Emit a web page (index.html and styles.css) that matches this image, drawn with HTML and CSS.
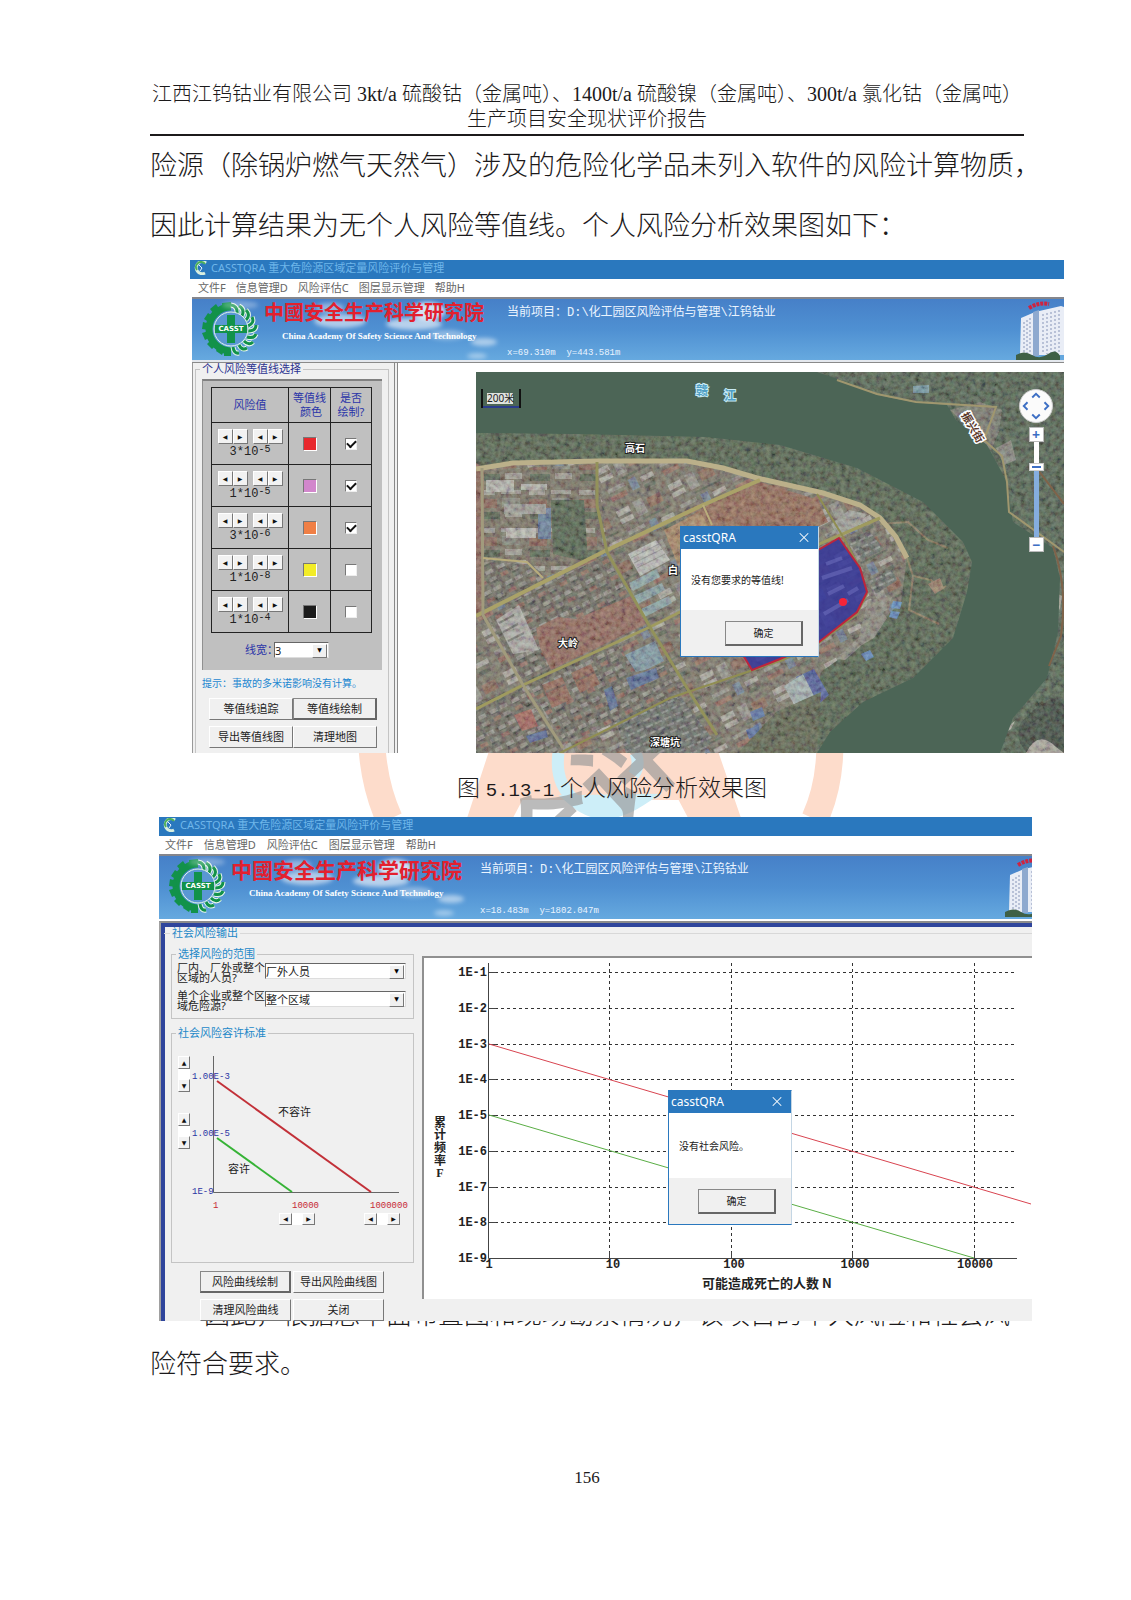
FILE: index.html
```html
<!DOCTYPE html>
<html lang="zh-CN">
<head>
<meta charset="utf-8">
<meta name="viewport" content="width=device-width, initial-scale=1">
<title>生产项目安全现状评价报告</title>
<link rel="stylesheet" href="styles.css">
</head>
<body>
<svg class="defs" width="0" height="0" aria-hidden="true">
  <defs>
    <symbol id="app-icon" viewBox="0 0 14 14">
      <path d="M12 2A6 6 0 1 0 11 12" fill="none" stroke="#d9efe0" stroke-width="3"/>
      <path d="M11 3A5 5 0 0 0 3 9" fill="none" stroke="#4aae5a" stroke-width="2"/>
      <path d="M5 4l3 3-2 3" fill="none" stroke="#e8f4ff" stroke-width="1"/>
    </symbol>
    <symbol id="casst-logo" viewBox="0 0 58 54">
      <path d="M29 5A22 22 0 0 0 29 49" fill="none" stroke="#12924a" stroke-width="7"/>
      <path d="M20 1l9-1v6h-9zM8 7l6-5 4 6-6 4zM2 17l4-6 6 4-4 6zM0 27l1-7 7 2-1 6zM3 38l-3-7 7-2 2 6zM10 47l-5-5 5-5 5 5zM20 53l-6-4 3-6 6 3zM29 54h-7v-6h7z" fill="#12924a"/>
      <g fill="none" stroke="#e6f6ea" stroke-width="5">
        <path d="M29 3q7 1 6 9M37 4q6 3 3 10M44 8q5 5 0 10M50 15q3 6-4 9M54 23q0 6-8 6M54 32q-2 5-9 3M51 40q-4 4-9-1M45 46q-5 3-8-3M37 51q-5 1-6-6"/>
      </g>
      <g fill="none" stroke="#12924a" stroke-width="3">
        <path d="M29 3q7 1 6 9M37 4q6 3 3 10M44 8q5 5 0 10M50 15q3 6-4 9M54 23q0 6-8 6M54 32q-2 5-9 3M51 40q-4 4-9-1M45 46q-5 3-8-3M37 51q-5 1-6-6"/>
      </g>
      <circle cx="29" cy="27" r="17" fill="#5a97d4" stroke="#e6f6ea" stroke-width="1"/>
      <path d="M25 13h8v10h12v8H33v10h-8V31H13v-8h12z" fill="#12924a"/>
      <text x="29" y="29" text-anchor="middle" class="logo-text">CASST</text>
    </symbol>
    <symbol id="clouds" viewBox="0 0 310 63">
      <g fill="#fff" filter="url(#soft)">
        <ellipse cx="148" cy="22" rx="26" ry="7" opacity=".55"/>
        <ellipse cx="138" cy="9" rx="14" ry="5" opacity=".4"/>
        <ellipse cx="236" cy="12" rx="17" ry="9" opacity=".75"/>
        <ellipse cx="222" cy="25" rx="28" ry="6" opacity=".6"/>
        <ellipse cx="255" cy="36" rx="18" ry="5" opacity=".35"/>
        <ellipse cx="292" cy="43" rx="13" ry="4" opacity=".5"/>
        <ellipse cx="285" cy="57" rx="10" ry="3" opacity=".4"/>
        <ellipse cx="48" cy="6" rx="18" ry="4" opacity=".3"/>
      </g>
    </symbol>
    <symbol id="tower" viewBox="0 0 48 60">
      <path d="M5 18l14-6 26-6 3 1v48H4z" fill="#e9edf6"/>
      <path d="M17 12l6-2v46h-6z" fill="#8ea9cf"/>
      <path d="M8 22v32M11 20v34M14 18v34M27 14v40M31 13v41M35 12v42M39 11v43M43 10v44" stroke="#8795b8" stroke-width="1" stroke-dasharray="2 2"/>
      <path d="M13 8q10-6 20-4" fill="none" stroke="#cf2440" stroke-width="4" stroke-dasharray="3 1"/>
      <path d="M0 55q8-5 16 0t16-1 12 2v4H0z" fill="#3f6046"/>
    </symbol>
    <filter id="soft"><feGaussianBlur stdDeviation="2"/></filter>
  </defs>
</svg>

<main class="page">
  <header class="page-header">
    <div>江西江钨钴业有限公司 3kt/a 硫酸钴（金属吨）、1400t/a 硫酸镍（金属吨）、300t/a 氯化钴（金属吨）</div>
    <div>生产项目安全现状评价报告</div>
  </header>

  <p class="body-text">险源（除锅炉燃气天然气）涉及的危险化学品未列入软件的风险计算物质，<br>因此计算结果为无个人风险等值线。个人风险分析效果图如下：</p>

  <figure class="window window-personal">
    <div class="titlebar"><svg class="app-icon"><use href="#app-icon"/></svg>CASSTQRA 重大危险源区域定量风险评价与管理</div>
    <nav class="menubar"><button>文件F</button><button>信息管理D</button><button>风险评估C</button><button>图层显示管理</button><button>帮助H</button></nav>
    <div class="banner">
      <svg class="clouds"><use href="#clouds"/></svg>
      <svg class="logo"><use href="#casst-logo"/></svg>
      <div class="org"><strong>中國安全生产科学研究院</strong><span>China Academy Of Safety Science And Technology</span></div>
      <div class="project"><span>当前项目：D:\化工园区风险评估与管理\江钨钴业</span><small>x=69.310m&nbsp; y=443.581m</small></div>
      <svg class="tower"><use href="#tower"/></svg>
    </div>
    <div class="personal-body">
      <form class="side">
        <fieldset class="group">
          <legend>个人风险等值线选择</legend>
          <div class="levels">
            <table>
              <thead><tr><th>风险值</th><th>等值线<br>&nbsp;颜色</th><th>是否<br>绘制?</th></tr></thead>
              <tbody>
                <tr><td><div class="steps"><button type="button" aria-label="减" class="step left"></button><button type="button" aria-label="加" class="step right"></button><button type="button" aria-label="指数减" class="step left"></button><button type="button" aria-label="指数加" class="step right"></button></div><div class="value">3*10<sup>-5</sup></div></td><td><span class="swatch red"></span></td><td><input type="checkbox" aria-label="绘制 3*10-5" checked></td></tr>
                <tr><td><div class="steps"><button type="button" aria-label="减" class="step left"></button><button type="button" aria-label="加" class="step right"></button><button type="button" aria-label="指数减" class="step left"></button><button type="button" aria-label="指数加" class="step right"></button></div><div class="value">1*10<sup>-5</sup></div></td><td><span class="swatch pink"></span></td><td><input type="checkbox" aria-label="绘制 1*10-5" checked></td></tr>
                <tr><td><div class="steps"><button type="button" aria-label="减" class="step left"></button><button type="button" aria-label="加" class="step right"></button><button type="button" aria-label="指数减" class="step left"></button><button type="button" aria-label="指数加" class="step right"></button></div><div class="value">3*10<sup>-6</sup></div></td><td><span class="swatch orange"></span></td><td><input type="checkbox" aria-label="绘制 3*10-6" checked></td></tr>
                <tr><td><div class="steps"><button type="button" aria-label="减" class="step left"></button><button type="button" aria-label="加" class="step right"></button><button type="button" aria-label="指数减" class="step left"></button><button type="button" aria-label="指数加" class="step right"></button></div><div class="value">1*10<sup>-8</sup></div></td><td><span class="swatch yellow"></span></td><td><input type="checkbox" aria-label="绘制 1*10-8"></td></tr>
                <tr><td><div class="steps"><button type="button" aria-label="减" class="step left"></button><button type="button" aria-label="加" class="step right"></button><button type="button" aria-label="指数减" class="step left"></button><button type="button" aria-label="指数加" class="step right"></button></div><div class="value">1*10<sup>-4</sup></div></td><td><span class="swatch black"></span></td><td><input type="checkbox" aria-label="绘制 1*10-4"></td></tr>
              </tbody>
            </table>
            <div class="line-width"><label for="lw">线宽：</label><span class="select narrow"><select id="lw"><option>3</option></select></span></div>
          </div>
          <p class="hint">提示：事故的多米诺影响没有计算。</p>
          <div class="actions">
            <button type="button" class="win-btn">等值线追踪</button><button type="button" class="win-btn default">等值线绘制</button>
            <button type="button" class="win-btn">导出等值线图</button><button type="button" class="win-btn">清理地图</button>
          </div>
        </fieldset>
      </form>
      <div class="map-area">
        <div class="map">
          <svg class="map-picture" viewBox="0 0 588 381" preserveAspectRatio="xMinYMin slice" role="img" aria-label="卫星地图">
            <defs>
              <filter id="grain" x="0" y="0" width="100%" height="100%">
                <feTurbulence type="fractalNoise" baseFrequency=".2" numOctaves="4" seed="4"/>
                <feColorMatrix values="1.6 0 0 0 -.35  0 1.6 0 0 -.4  0 0 1.5 0 -.4  0 0 0 0 1"/>
                <feColorMatrix type="saturate" values=".25"/>
              </filter>
              <pattern id="works" width="58" height="46" patternUnits="userSpaceOnUse" patternTransform="rotate(-27)">
                <rect width="58" height="46" fill="#706b5c"/>
                <path d="M3 4h14v6H3zM3 13h14v5H3zM40 30h14v5H40z" fill="#aaa79d"/>
                <path d="M22 3h10v16H22zM5 27h18v4H5z" fill="#908f86"/>
                <path d="M36 6h15v10H36z" fill="#85604d"/>
                <path d="M28 27h8v12h-8z" fill="#66798f"/>
                <path d="M5 35h17v5H5z" fill="#8f6353"/>
                <path d="M40 39h12v4H40zM24 22h30v2H24z" fill="#505a49"/>
              </pattern>
              <pattern id="homes" width="24" height="18" patternUnits="userSpaceOnUse" patternTransform="rotate(-27)">
                <rect width="24" height="18" fill="#62605400"/>
                <rect width="24" height="18" fill="#626054"/>
                <path d="M2 2h8v4H2zM13 2h8v4h-8z" fill="#8f8c83"/>
                <path d="M2 10h8v4H2z" fill="#8a6152"/><path d="M13 10h8v4h-8z" fill="#827e73"/>
                <path d="M2 6h8v1H2zM13 14h8v2h-8z" fill="#454a40"/>
              </pattern>
              <pattern id="terraces" width="10" height="7" patternUnits="userSpaceOnUse" patternTransform="rotate(-24)">
                <rect width="10" height="7" fill="#5b615b"/><path d="M1 1h7v2H1z" fill="#868a85"/>
              </pattern>
              <pattern id="straight" width="50" height="38" patternUnits="userSpaceOnUse">
                <rect width="50" height="38" fill="#6f6857"/>
                <path d="M3 4h16v5H3zM25 4h20v4H25zM29 25h17v6H29z" fill="#9d9a90"/>
                <path d="M3 13h18v9H3z" fill="#825c4b"/><path d="M26 12h18v9H26z" fill="#7d8074"/><path d="M4 26h20v7H4z" fill="#4b5944"/>
              </pattern>
            </defs>
            <rect width="588" height="381" fill="#4d6351"/>
            <path d="M0 61L100 58 230 63 304 73 381 96 447 130 487 170 496 190 491 220 477 266 437 306 387 330 354 360 341 381H0z" fill="#45573f"/>
            <path d="M341 0L371 10 401 23 437 30 471 33 480 48 511 73 531 110 537 150 577 176 588 200V0zM524 381L537 346 571 306 582 260 588 230V381z" fill="#435742"/>
            <path d="M0 96L37 91 121 89 211 89 247 96 281 106 347 121 384 133 404 146 431 186 425 230 380 275 345 300 341 320 320 381H0z" fill="url(#works)"/>
            <path d="M8 98L120 92 132 180 70 205 51 188 8 186z" fill="url(#straight)"/>
            <path d="M122 92L210 92 275 106 227 130 135 174z" fill="url(#works)"/>
            <path d="M75 128h33l4 62-35-8z" fill="#44573f"/>
            <path d="M8 190L52 192 63 212 8 238z" fill="url(#homes)"/>
            <path d="M63 213L130 184 170 250 70 296 48 308 12 246z" fill="url(#homes)"/>
            <path d="M60 256L82 245 100 247 155 224 170 252 75 298 64 276z" fill="#8c5e4f"/>
            <path d="M20 248L43 233 63 278 37 282z" fill="#aaa9a3"/>
            <path d="M23 251l15-8M27 260l15-8M32 269l16-8" stroke="#6b6d67" stroke-width="2"/>
            <path d="M232 133L284 110 310 118 342 128 352 150 304 172 205 172 204 150z" fill="#8f614a"/>
            <path d="M188 158l36-18 18 30-40 24z" fill="#a6805a"/>
            <path d="M152 182l28-14 14 20-30 16z" fill="#b9bbb6"/>
            <path d="M155 186l28-14M158 191l28-14M161 196l28-14" stroke="#8d908c"/>
            <path d="M153 211l28-14 3 8-27 14zM158 224l28-13 3 7-27 14zM165 237l28-13 3 7-27 14z" fill="#84a2a4"/>
            <path d="M149 283l30-14 9 20-28 14z" fill="#7795a2"/>
            <path d="M62 136h13v31H62z" fill="#5c7898"/><path d="M28 132h42v10H28z" fill="#9d9d96"/><path d="M30 156h30v10H30z" fill="#b7b7b0"/>
            <path d="M10 108h28v12H10zM45 112h26v6H45z" fill="#b3b3ab"/>
            <path d="M50 310L140 270 160 300 195 292 214 318 90 372z" fill="url(#homes)"/>
            <path d="M66 313l20-8 10 22-20 9zM95 301l20-9 9 20-20 9z" fill="#8d5d4b"/>
            <path d="M70 320l20-8M100 309l19-9" stroke="#6b5548" stroke-width="2"/>
            <path d="M128 318l8-4 6 20-8 5zM150 306l30-10 3 10-28 12z" fill="#4a6392"/>
            <path d="M140 348L194 327 205 325 236 366 228 381H150z" fill="url(#terraces)"/>
            <path d="M0 338L45 316 86 376 80 381H0z" fill="url(#homes)"/>
            <path d="M38 343l17-6 7 17-16 5z" fill="#a35a50"/><path d="M50 364l20-6 2 7-18 6z" fill="#485c92"/>
            <path d="M320 305l18-8 15 26-18 16z" fill="#43549a"/><path d="M308 314l19-12 12 24-18 12z" fill="#a2b2b2"/>
            <path d="M274 340l12-5 3 9-12 5zM270 358l12-5 3 9-12 5z" fill="#4a68a0"/>
            <path d="M0 91L8 96 8 240 0 243z" fill="#875d4e"/>
            <path d="M300 340L345 320 341 381H262z" fill="#515941"/>
            <path d="M392 228l24-3-3 12-7 3 5 6-13 20-12 7-17 15-8-1 22-22z" fill="#858377"/>
            <path d="M417 229l9 1-2 7-9-1zM415 239l9 1-3 7-8-2zM385 282l9-4 4 7-8 4z" fill="#5585c0"/>
            <path d="M371 168l22-9 15 18-22 12zM393 208l22-11 6 11-21 14z" fill="url(#terraces)"/>
            <path d="M355 152l18-14 18 4-12 16-16 8z" fill="#9b9d95"/>
            <path d="M431 186l6 18 18 4 9 10 6-4M437 204l-4 34 30 14M404 152l28-2 20 18 20 8" fill="none" stroke="#80704f" stroke-width="2"/>
            <path d="M452 212l12-6 4 10-9 6z" fill="#96785e"/>
            <path d="M474 38l30-8 22 8-3 22-8 18-20-20z" fill="#6f7064"/><path d="M437 14l16-1v8h-16z" fill="#6892a2"/>
            <path d="M520 76l15-8 5 20-12 5z" fill="#7f8177"/><path d="M544 352q18-22 38-26l6 8v47h-36q-14-12-8-29z" fill="#2d3c30"/>
            <path d="M550 381q12-24 30-6l8 6zM527 358l12-9-4 8-8 6zM582 222l4 2-2 14-3-6z" fill="#a8a599"/>
            <rect width="588" height="381" filter="url(#grain)" class="grain"/>
            <path d="M0 0H341L371 10 401 23 437 30 471 33 480 48 511 73 531 110 537 150 577 176 584 206 582 260 571 306 537 346 524 381H341L354 360 387 330 437 306 477 266 491 220 496 190 487 170 447 130 381 96 304 73 230 65 100 62 0 61z" fill="#4c6556"/>
            <g fill="none" stroke="#b9ad7c" stroke-width="4">
              <path d="M0 97L37 91 121 89 211 89 247 96 281 106 347 121 384 133 404 146 420 165 431 186" stroke-width="5" stroke="#bbb08a"/>
              <path d="M0 244L127 180 227 133 284 108" stroke="#aaa268" stroke-width="4"/>
              <path d="M0 337L47 313 174 255 204 240 343 172 404 146" stroke="#9f9b5f" stroke-width="3"/>
              <path d="M84 381L194 326 307 288 343 271 381 242 391 222 384 196 366 163 341 122" stroke="#908e52" stroke-width="2"/>
              <path d="M121 90L121 133 131 180 174 255 211 316 241 363" stroke="#93925a" stroke-width="3"/>
              <path d="M6 96L7 243 47 313 87 376" stroke="#a19b7d" stroke-width="3"/>
              <path d="M7 186L51 190 67 206M227 133l9 20" stroke-width="2"/>
              <path d="M361 8L401 22 440 30 520 35 508 68 526 84 531 110 533 140 588 180" stroke-width="2" stroke="#a0976f"/>
              <path d="M562 98l26 34M577 174q15 40 8 90l-12 30" stroke="#7f634a" stroke-width="2"/>
            </g>
            <path d="M276 298L267 283 330 185 363 166 384 196 391 220 381 240 343 270 304 287z" fill="#35369b" fill-opacity=".85" stroke="#bd253c" stroke-width="2"/>
            <path d="M350 192l16-6M346 206l30-10M352 222l16-8M372 222l10-6M348 242l24-14" stroke="#7374c2" stroke-width="4" opacity=".5"/>
            <circle cx="367" cy="230" r="4" fill="#f52438"/>
            <g class="map-labels">
              <text x="149" y="80">高石</text><text x="82" y="275">大岭</text><text x="174" y="374">深塘坑</text><text x="192" y="202">白</text>
            </g>
            <g class="river-labels"><text x="220" y="23">赣</text><text x="248" y="28">江</text></g>
            <text class="street-label" x="485" y="43" transform="rotate(60 485 43)">振兴街</text>
          </svg>
          <div class="scale">200米</div>
          <div class="map-nav">
            <button type="button" class="pan" aria-label="平移"><svg viewBox="0 0 34 34"><path d="M13 8l4-4 4 4M13 26l4 4 4-4M8 13l-4 4 4 4M26 13l4 4-4 4" fill="none" stroke="#3d6fc4" stroke-width="2"/></svg></button>
            <button type="button" class="zoom">+</button>
            <span class="track"><span class="thumb"></span></span>
            <button type="button" class="zoom">−</button>
          </div>
          <section class="dialog dialog-contour" role="dialog" aria-label="casstQRA">
            <div class="dialog-title">casstQRA<button type="button" aria-label="关闭" class="close"></button></div>
            <p>没有您要求的等值线!</p>
            <footer><button type="button" class="win-btn default">确定</button></footer>
          </section>
        </div>
      </div>
    </div>
  </figure>

  <div class="caption">
    <svg class="watermark" viewBox="0 0 873 64" preserveAspectRatio="xMidYMin slice" aria-hidden="true">
      <g fill="none" stroke="#fddccb" stroke-width="27"><path d="M222 -2Q225 35 239 66M679 -2Q678 35 664 66"/></g>
      <path d="M338 0H568L590 64H537L528 47H372L363 64H317z" fill="#fddccb"/>
      <path d="M408 0Q404 30 424 47M485 0q5 12-2 22M424 48q28 24 66-1z" fill="none" stroke="#cdeef8" stroke-width="12"/>
      <text x="393" y="141" transform="rotate(-43 393 141)" class="watermark-text">全评价</text>
    </svg>
    <span class="caption-text">图 <span class="figure-number">5.13-1</span> 个人风险分析效果图</span>
  </div>

  <figure class="window window-social">
    <div class="titlebar"><svg class="app-icon"><use href="#app-icon"/></svg>CASSTQRA 重大危险源区域定量风险评价与管理</div>
    <nav class="menubar"><button>文件F</button><button>信息管理D</button><button>风险评估C</button><button>图层显示管理</button><button>帮助H</button></nav>
    <div class="banner">
      <svg class="clouds"><use href="#clouds"/></svg>
      <svg class="logo"><use href="#casst-logo"/></svg>
      <div class="org"><strong>中國安全生产科学研究院</strong><span>China Academy Of Safety Science And Technology</span></div>
      <div class="project"><span>当前项目：D:\化工园区风险评估与管理\江钨钴业</span><small>x=18.483m&nbsp; y=1802.047m</small></div>
      <svg class="tower"><use href="#tower"/></svg>
    </div>
    <div class="social-body">
      <fieldset class="output">
        <legend>社会风险输出</legend>
        <div class="output-columns">
          <form class="controls">
            <fieldset class="group scope">
              <legend>选择风险的范围</legend>
              <div class="field"><label for="who">厂内、厂外或整个区域的人员?</label><span class="select"><select id="who"><option>厂外人员</option></select></span></div>
              <div class="field"><label for="where">单个企业或整个区域危险源?</label><span class="select"><select id="where"><option>整个区域</option></select></span></div>
            </fieldset>
            <fieldset class="group criteria">
              <legend>社会风险容许标准</legend>
              <svg viewBox="0 0 241 223" class="criteria-chart">
                <path d="M41.500 17V153.500H227" fill="none" stroke="#666"/>
                <path d="M45 42L199 153" stroke="#c23038" stroke-width="2"/>
                <path d="M45 99L120 153" stroke="#36b336" stroke-width="2"/>
                <g class="tick-blue"><text x="20" y="40">1.00E-3</text><text x="20" y="97">1.00E-5</text><text x="20" y="155">1E-9</text></g>
                <g class="tick-red"><text x="41" y="169">1</text><text x="120" y="169">10000</text><text x="198" y="169">1000000</text></g>
                <g class="zone"><text x="106" y="77">不容许</text><text x="56" y="134">容许</text></g>
              </svg>
              <div class="spin upper"><button type="button" aria-label="上" class="step up"></button><i></i><button type="button" aria-label="下" class="step down"></button></div>
              <div class="spin lower"><button type="button" aria-label="上" class="step up"></button><i></i><button type="button" aria-label="下" class="step down"></button></div>
              <div class="scroll near"><button type="button" aria-label="左" class="step left"></button><i></i><button type="button" aria-label="右" class="step right"></button></div>
              <div class="scroll far"><button type="button" aria-label="左" class="step left"></button><i></i><button type="button" aria-label="右" class="step right"></button></div>
            </fieldset>
            <div class="actions">
              <button type="button" class="win-btn default">风险曲线绘制</button><button type="button" class="win-btn">导出风险曲线图</button>
              <button type="button" class="win-btn">清理风险曲线</button><button type="button" class="win-btn">关闭</button>
            </div>
          </form>
          <div class="plot">
            <svg viewBox="0 0 607 341" preserveAspectRatio="xMinYMin meet" role="img" aria-label="累计频率 F 与可能造成死亡的人数 N">
              <g stroke="#333" stroke-dasharray="3 3">
                <path d="M65 14.500H593M65 50.500H593M65 86.500H593M65 121.500H593M65 157.500H593M65 193.500H593M65 229.500H593M65 264.500H593M185.500 5V300M307.500 5V300M428.500 5V300M550.500 5V300"/>
              </g>
              <path d="M64.500 5V300.500H593M65 14.500h7M65 50.500h7M65 86.500h7M65 121.500h7M65 157.500h7M65 193.500h7M65 229.500h7M65 264.500h7M185.500 300v-6M307.500 300v-6M428.500 300v-6M550.500 300v-6" fill="none" stroke="#444"/>
              <path d="M65 86L607 246" stroke="#d94450"/>
              <path d="M65 157L550 300" stroke="#5aae45"/>
              <g class="axis-y"><text x="63" y="18">1E-1</text><text x="63" y="54">1E-2</text><text x="63" y="90">1E-3</text><text x="63" y="125">1E-4</text><text x="63" y="161">1E-5</text><text x="63" y="197">1E-6</text><text x="63" y="233">1E-7</text><text x="63" y="268">1E-8</text><text x="63" y="304">1E-9</text></g>
              <g class="axis-x"><text x="65" y="310">1</text><text x="189" y="310">10</text><text x="310" y="310">100</text><text x="431" y="310">1000</text><text x="551" y="310">10000</text></g>
              <text class="axis-title" x="278" y="330">可能造成死亡的人数 N</text>
              <g class="axis-side"><text x="16" y="169">累</text><text x="16" y="181">计</text><text x="16" y="194">频</text><text x="16" y="207">率</text><text x="16" y="219">F</text></g>
            </svg>
            <section class="dialog dialog-social" role="dialog" aria-label="casstQRA">
              <div class="dialog-title">casstQRA<button type="button" aria-label="关闭" class="close"></button></div>
              <p>没有社会风险。</p>
              <footer><button type="button" class="win-btn default">确定</button></footer>
            </section>
          </div>
        </div>
      </fieldset>
    </div>
  </figure>

  <p class="body-text closing">因此，根据总平面布置图和现场勘察情况，该项目的个人风险和社会风<br>险符合要求。</p>
  <footer class="page-number">156</footer>
</main>
</body>
</html>
```
FILE: styles.css
```css
* { box-sizing: border-box; }
body { margin: 0; background: #fff; color: #1c1a1b; font-family: "Liberation Serif", "Noto Sans CJK SC", serif; }
button, select, input { font: inherit; color: inherit; margin: 0; padding: 0; border-radius: 0; }
.defs { position: absolute; }
.page { padding: 82px 107px 112px 150px; overflow: hidden; }

.page-header { border-bottom: 2px solid #1c1a1b; padding-bottom: 2px; text-align: center; font-size: 20px; font-weight: 300; line-height: 25px; white-space: nowrap; }
.body-text { margin: 0; font-size: 27px; font-weight: 300; line-height: 60px; white-space: nowrap; }

/* application windows */
.window { position: relative; z-index: 1; background: #fff; font: 11px/14px "Noto Sans", "Noto Sans CJK SC", sans-serif; }
.window-personal { margin: 4px -40px 0 40px; }
.window-social { margin: 0 -8px 0 9px; }
.titlebar { display: flex; align-items: center; gap: 3px; height: 19px; padding: 0 0 4px 4px; background: #2a78be; color: #6fb6ea; white-space: nowrap; }
.app-icon { width: 14px; height: 14px; }
.menubar { display: flex; gap: 10px; height: 18px; padding-left: 8px; color: #666; }
.window-social .menubar { padding-left: 6px; gap: 11px; }
.menubar button { border: 0; background: none; line-height: 16px; }
.banner { position: relative; display: flex; height: 65px; overflow: hidden; margin-left: 2px; border-top: 2px solid #85868c; border-bottom: 2px solid #e4e8ee; background: linear-gradient(#4680c8, #4f90d2 50%, #66a9df); }
.window-social .banner { height: 67px; margin-left: 0; border-bottom-color: #fff; }
.clouds { position: absolute; left: 0; top: 0; width: 310px; height: 63px; }
.logo { width: 58px; height: 54px; margin: 3px 0 0 10px; flex: none; }
.logo-text { font: bold 7px "DejaVu Sans", sans-serif; fill: #fff; }
.org { position: relative; width: 247px; padding-left: 4px; flex: none; white-space: nowrap; }
.org strong { display: block; color: #e3202e; font-size: 20px; line-height: 28px; }
.window-social .org strong { font-size: 21px; }
.org span { display: block; padding-left: 18px; color: #fff; font: bold 9px/18px "Liberation Serif", serif; }
.project { display: flex; flex-direction: column; justify-content: space-between; padding: 6px 0 1px; color: #eaf4ff; white-space: nowrap; font: 12px/16px "Liberation Mono", "Noto Sans CJK SC", monospace; }
.project small { font-size: 9px; line-height: 12px; }
.window-social .project { margin-left: 6px; padding-bottom: 2px; }
.tower { position: absolute; right: 0; top: 1px; width: 48px; height: 60px; }
.window-social .tower { right: -21px; }

/* controls shared by both windows */
fieldset { min-width: 0; margin: 0; padding: 0; border: 1px solid #c4c4c4; }
legend { margin-left: 4px; padding: 0 2px; line-height: 12px; }
.win-btn { height: 22px; border: 1px solid; border-color: #fff #777 #777 #fff; background: #f0f0f0; color: #222; text-align: center; line-height: 18px; white-space: nowrap; }
.win-btn.default { border-color: #888 #666 #666 #888; border-bottom-width: 2px; border-right-width: 2px; }
.actions { display: grid; row-gap: 6px; }
.select { position: relative; display: block; height: 16px; }
.select select { width: 100%; height: 100%; appearance: none; border: 1px solid; border-color: #666 #ddd #ddd #666; background: #fff; color: #222; line-height: 13px; }
.select::after { content: "▼"; position: absolute; top: 2px; right: 2px; width: 13px; height: 12px; background: #f0f0f0; border: 1px solid; border-color: #fff #777 #777 #fff; color: #000; font: 6px/10px "DejaVu Sans", sans-serif; text-align: center; pointer-events: none; }
.step { display: grid; place-items: center; border: 1px solid; border-color: #fff #777 #777 #fff; background: #f2f2f2; color: #111; font: 6px/8px "DejaVu Sans", sans-serif; }
.step.left::before { content: "◀"; }
.step.right::before { content: "▶"; }
.step.up::before { content: "▲"; }
.step.down::before { content: "▼"; }

/* personal risk window */
.personal-body { display: flex; margin-left: 2px; border-top: 1px solid #8a8a8a; }
.side { width: 206px; flex: none; padding: 0 5px 0 2px; background: #f0f0f0; border-left: 1px solid #999; border-right: 4px double #888; }
.side .group { border-bottom: 0; padding-bottom: 5px; }
.side legend { color: #2b3290; }
.levels { width: 180px; height: 291px; margin: 4px 0 0 6px; padding: 6px 9px 0 8px; background: #c0c0c0; border-top: 2px solid #808080; border-left: 1px solid #909090; }
.levels table { width: 161px; border-collapse: collapse; table-layout: fixed; }
.levels th, .levels td { border: 1px solid #222; padding: 0; text-align: center; vertical-align: middle; }
.levels th { height: 35px; color: #2a34a8; font-weight: 400; }
.levels th:first-child { width: 77px; }
.levels th:nth-child(2) { width: 42px; }
.levels td { height: 42px; }
.steps { display: flex; justify-content: center; height: 15px; margin-top: 2px; }
.steps .step { width: 15px; height: 15px; }
.steps .step:nth-child(3) { margin-left: 5px; }
.value { font: 12px/16px "Liberation Mono", monospace; color: #222; }
.value sup { font-size: 10px; line-height: 0; vertical-align: 3px; }
.swatch { display: block; width: 14px; height: 14px; margin: 0 auto; border: 1px solid; border-color: #777 #fff #fff #777; }
.red { background: #e8282d; }
.pink { background: #d287cc; }
.orange { background: #f07f45; }
.yellow { background: #f2ec27; }
.black { background: #1c1c1c; }
.levels input { display: block; appearance: none; width: 12px; height: 12px; margin: 0 auto; background: #fff; border: 1px solid; border-color: #777 #eee #eee #777; }
.levels input:checked::after { content: ""; display: block; width: 7px; height: 4px; margin: 1px; border: solid #111; border-width: 0 0 2px 2px; transform: rotate(-45deg); }
.line-width { display: flex; align-items: center; height: 16px; margin-top: 9px; padding-left: 34px; color: #2a34a8; }
.line-width label { width: 29px; white-space: nowrap; }
.select.narrow { width: 55px; }
.hint { margin: 6px 0 8px 6px; color: #1c87d0; font-size: 10px; white-space: nowrap; }
.side .actions { grid-template-columns: 84px 84px; padding-left: 13px; }
.map-area { flex: 1; min-width: 0; padding: 9px 0 0 78px; background: #fff; }
.map { position: relative; height: 381px; overflow: hidden; }
.map-picture { display: block; width: 100%; height: 381px; }
.grain { opacity: .32; }
.map-labels { font: bold 10px "Noto Sans CJK SC", sans-serif; fill: #fff; stroke: #222; stroke-width: 2px; paint-order: stroke; }
.river-labels { font: bold 12px "Noto Sans CJK SC", sans-serif; fill: #4f9fc4; stroke: #c8eaf4; stroke-width: 2px; paint-order: stroke; }
.street-label { font: bold 11px "Noto Sans CJK SC", sans-serif; fill: #5b3a2c; stroke: #fff; stroke-width: 3px; paint-order: stroke; }
.scale { position: absolute; z-index: 0; left: 5px; top: 17px; width: 40px; height: 19px; padding: 2px 4px; border: solid #111; border-width: 0 2px; box-shadow: inset 0 -2px #2b3c8c; color: #222; font-size: 10px; line-height: 14px; white-space: nowrap; }
.scale::before { content: ""; position: absolute; inset: 4px 6px 4px 4px; background: #dfe3df; z-index: -1; }
.map-nav { position: absolute; right: 11px; top: 17px; width: 34px; display: flex; flex-direction: column; align-items: center; }
.pan { width: 34px; height: 34px; margin-bottom: 4px; border: 1px solid #ccc; border-radius: 50%; background: #fbfbfb; }
.pan svg { display: block; width: 32px; height: 32px; }
.zoom { width: 15px; height: 15px; border: 1px solid #bbb; background: #fff; color: #3d6fc4; font-size: 14px; font-weight: 700; line-height: 12px; }
.track { width: 5px; height: 95px; padding-top: 21px; background: linear-gradient(#fff 26px, #85addf 26px); }
.thumb { display: block; width: 15px; height: 8px; margin-left: -5px; background: #fff linear-gradient(#3d6fc4, #3d6fc4) center / 9px 2px no-repeat; border: 1px solid #ccc; }

/* message boxes */
.dialog { position: absolute; display: flex; flex-direction: column; background: #fff; color: #222; border: 1px solid #2a78be; border-right-color: #c4d6e4; }
.dialog-title { display: flex; align-items: center; justify-content: space-between; height: 22px; padding: 0 8px 0 2px; background: #2a78be; color: #fff; font-size: 12px; }
.close { position: relative; width: 12px; height: 12px; border: 0; background: none; }
.close::before, .close::after { content: ""; position: absolute; left: 0; top: 5px; width: 12px; height: 1px; background: #fff; transform: rotate(45deg); }
.close::after { transform: rotate(-45deg); }
.dialog p { flex: 1; display: flex; align-items: center; margin: 0; padding-left: 10px; font-size: 10px; white-space: nowrap; }
.dialog footer { display: flex; justify-content: flex-end; align-items: center; height: 46px; padding-right: 15px; background: #f0f0f0; }
.dialog .win-btn { width: 78px; height: 25px; font-size: 10px; }
.dialog-contour { left: 204px; top: 154px; width: 139px; height: 131px; }
.dialog-social { left: 244px; top: 132px; width: 124px; height: 135px; }

/* caption between the windows */
.caption { position: relative; height: 64px; display: flex; align-items: center; justify-content: center; padding: 2px 0 0 50px; font-size: 23px; font-weight: 300; white-space: nowrap; }
.watermark { position: absolute; inset: 0; width: 100%; height: 64px; }
.watermark-text { font: bold 100px "Noto Sans CJK SC", sans-serif; fill: #969696; fill-opacity: .65; }
.caption-text { position: relative; }
.figure-number { font: 19px "Liberation Mono", monospace; }

/* social risk window */
.social-body { padding-left: 3px; border-left: 2px solid #a0a0a0; border-top: 2px solid #8c8c8c; background: linear-gradient(90deg, #2f459c 4px, #f0f0f0 4px); }
.social-body::before { content: ""; display: block; height: 4px; margin-left: -3px; background: #2f459c; }
.output { border: solid #d8d8d8; border-width: 1px 0 0; }
.output > legend { margin-left: 6px; color: #2388c8; }
.output .group > legend { color: #2388c8; }
.output-columns { display: flex; gap: 8px; padding: 9px 0 0 7px; }
.controls { width: 243px; flex: none; }
.scope { height: 71px; padding-top: 3px; }
.field { display: flex; height: 20px; margin-bottom: 8px; padding-left: 5px; color: #222; }
.field label { width: 88px; line-height: 10px; word-break: break-all; flex: none; }
.field .select { width: 141px; }
.criteria { position: relative; height: 236px; margin: 8px 0; }
.criteria-chart { display: block; width: 241px; height: 223px; }
.tick-blue, .tick-red { font: 9px "Liberation Mono", monospace; fill: #2b34a4; }
.tick-red { fill: #c62835; }
.zone { font: 11px "Noto Sans CJK SC", sans-serif; fill: #222; }
.spin, .scroll { position: absolute; display: flex; background: #fff; }
.spin { flex-direction: column; left: 6px; width: 12px; height: 36px; }
.scroll { width: 36px; height: 12px; top: 174px; }
.spin i, .scroll i { flex: 1; }
.spin .step { height: 13px; }
.scroll .step { width: 13px; }
.upper { top: 17px; }
.lower { top: 74px; }
.near { left: 107px; }
.far { left: 192px; }
.controls .actions { grid-template-columns: 91px 91px; column-gap: 2px; padding-left: 29px; }
.plot { position: relative; flex: 1; min-width: 0; height: 343px; margin-top: 8px; background: #fff; border: solid #909090; border-width: 2px 0 0 2px; overflow: hidden; }
.plot svg { display: block; width: 100%; height: 341px; }
.axis-y, .axis-x { font: bold 12px "Liberation Mono", monospace; fill: #222; }
.axis-y { text-anchor: end; }
.axis-x, .axis-side { text-anchor: middle; }
.axis-title { font: bold 13px "Noto Sans CJK SC", sans-serif; fill: #222; }
.axis-side { font: bold 12px "Liberation Serif", "Noto Sans CJK SC", serif; fill: #222; }

.closing { margin-top: -30px; font-size: 26px; line-height: 49px; text-indent: 54px; }
.page-number { margin-top: 79px; text-align: center; font-size: 17px; line-height: 20px; }
```
